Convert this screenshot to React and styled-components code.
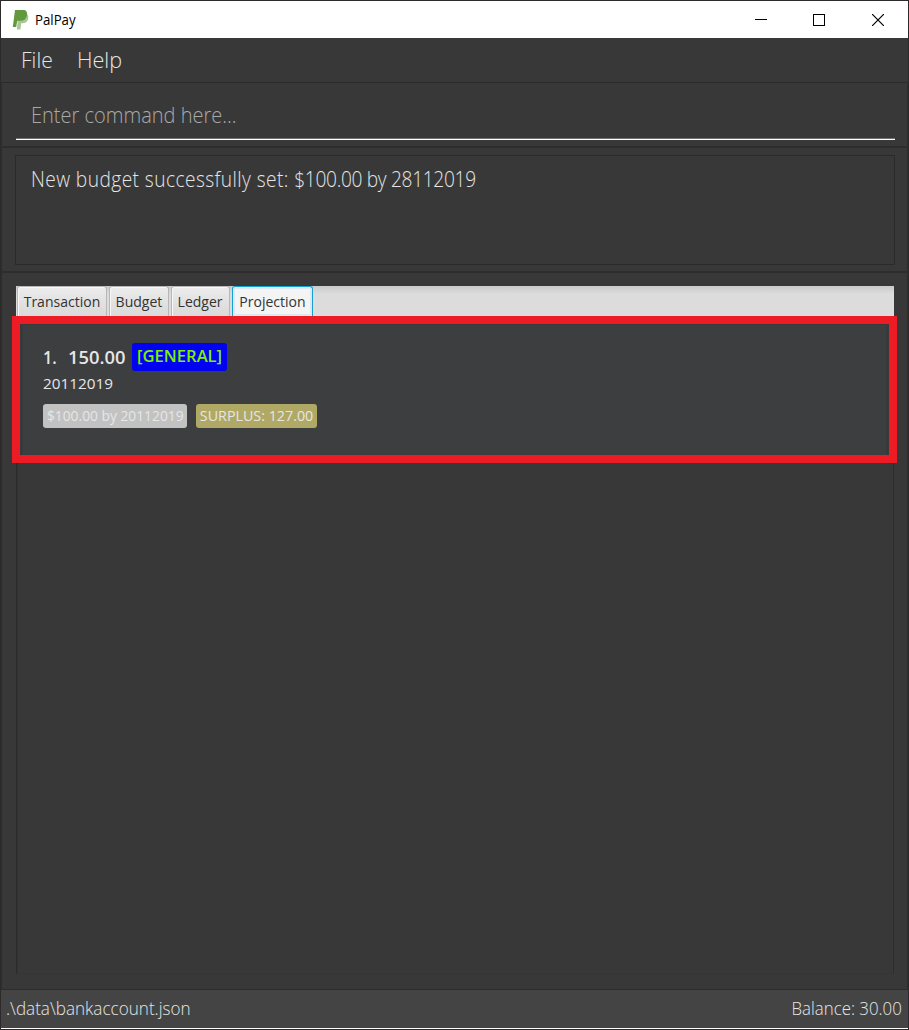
import React from "react";
import styled, { createGlobalStyle } from "styled-components";

const Global = createGlobalStyle`
  * { box-sizing: border-box; }
  html, body { margin: 0; background: #2b2b2b; }
  body { font-family: "Open Sans", "Noto Sans", sans-serif; overflow: hidden; }
`;

const Window = styled.div`
  width: 909px;
  height: 1030px;
  display: flex;
  flex-direction: column;
  border: 1px solid #2d2a2b;
  background: #383838;
`;

const Text = styled.span`
  display: block;
  flex: none;
  width: max-content;
  white-space: pre;
  font-size: ${(p) => p.$size}px;
  line-height: ${(p) => p.$line || 30}px;
  font-weight: ${(p) => p.$weight || 300};
  color: ${(p) => p.$color || "#e6e6e6"};
  letter-spacing: ${(p) => p.$track || 0}px;
  transform: scaleX(${(p) => p.$narrow || 1});
  transform-origin: ${(p) => p.$origin || "left"} center;
`;

const Spaced = styled.span`
  letter-spacing: ${(p) => p.$track}px;
`;

const TitleBar = styled.header`
  height: 37px;
  flex: none;
  display: flex;
  align-items: center;
  background: #fff;
  padding-left: 11px;
`;

const Logo = styled.svg`
  width: 18px;
  height: 22px;
  margin-right: 5px;
`;

const Controls = styled.div`
  margin-left: auto;
  display: grid;
  grid-template-columns: 58px 59px 12px;
  padding-right: 24px;
`;

const Control = styled.svg`
  width: 12px;
  height: 12px;
  fill: none;
  stroke: #000;
  shape-rendering: ${(p) => (p.$smooth ? "auto" : "crispEdges")};
`;

const MenuBar = styled.nav`
  height: 45px;
  flex: none;
  display: flex;
  gap: 23px;
  padding: 6px 20px 0;
  border-bottom: 1px solid #2b2b2b;
`;

const CommandPane = styled.section`
  height: 65px;
  flex: none;
  padding: 12px 12px 0 15px;
  border: solid #2d2d2d;
  border-width: 0 1px 2px;
`;

const CommandField = styled.div`
  height: 45px;
  padding: 4px 0 0 15px;
  border-bottom: 1px solid #fff;
  box-shadow: inset 0 -1px #727272;
  margin-left: -1px;
`;

const ResultPane = styled.section`
  height: 125px;
  flex: none;
  padding: 7px 12px 0 13px;
  border: solid #2d2d2d;
  border-width: 0 1px 2px;
`;

const ResultBox = styled.div`
  height: 110px;
  padding: 7px 15px;
  border: 1px solid #2b2b2b;
`;

const ListPane = styled.main`
  flex: 1;
  padding: 13px 13px 15px 14px;
  border: solid #2d2d2d;
  border-width: 0 1px 1px;
  display: flex;
  flex-direction: column;
`;

const TabStrip = styled.div`
  height: 30px;
  flex: none;
  display: flex;
  gap: 2px;
  padding-left: 1px;
  background: linear-gradient(#cacaca, #dcdcdc 8px);
`;

const Tab = styled.div`
  width: ${(p) => p.$width}px;
  height: 30px;
  display: flex;
  justify-content: center;
  border: 1px solid ${(p) => (p.$active ? "#169fd0" : "#b7b7b7")};
  border-bottom: 0;
  border-radius: 3px 3px 0 0;
  background: ${(p) => (p.$active ? "#f4f4f4" : "linear-gradient(#ececec, #d9d9d9)")};
  box-shadow: ${(p) => (p.$active ? "inset 0 0 0 2px #dce9f0" : "inset 1px 1px #f7f7f7")};
`;

const TabContent = styled.div`
  flex: 1;
  border: solid #2c2c2c;
  border-width: 0 1px;
  box-shadow: inset 1px 0 #323232, inset 0 -1px #353535;
`;

const Highlight = styled.div`
  height: 147px;
  margin: 0 -4px 0 -5px;
  border: 8px solid #ed1c24;
  background: #3c3e3f;
  box-shadow: inset 3px 1px #37393a, inset -3px 0 #37393a;
  padding: 19px 23px;
`;

const AmountRow = styled.div`
  display: grid;
  grid-template-columns: 24.5px 64.5px 95px;
  height: 28px;
`;

const Category = styled.div`
  height: 28px;
  background: #0202f2;
  border-radius: 3px;
  display: flex;
  justify-content: center;
`;

const TagRow = styled.div`
  display: flex;
  gap: 9px;
  margin-top: 8px;
`;

const Tag = styled.div`
  width: ${(p) => p.$width}px;
  height: 24px;
  border-radius: 3px;
  background: ${(p) => p.$fill};
  display: flex;
  justify-content: center;
`;

const StatusBar = styled.footer`
  height: 39px;
  flex: none;
  display: flex;
  justify-content: space-between;
  padding: 4px 6px 0 5px;
  background: #444;
  border-bottom: 1px solid #fff;
`;

const tabs = [
  { name: "Transaction", width: 90 },
  { name: "Budget", width: 60 },
  { name: "Ledger", width: 59 },
  { name: "Projection", width: 81, active: true },
];

export default function App() {
  return (
    <>
      <Global />
      <Window>
        <TitleBar>
          <Logo viewBox="0 0 18 22">
            <path d="M6.5 5h8.2c1.8 1.2 2 3.2 1.4 5.2-.8 2.8-2.8 4-5.6 4H9.2L8.4 20.5H4.8z" fill="#a9c796" />
            <path d="M3 1h8.2c3 0 4.4 2 3.8 5.2-.7 3.7-3 5.6-6.5 5.6H6.2c-.7 0-1 .4-1.1 1L4.2 18H.8z" fill="#62993e" />
          </Logo>
          <Text $size={14} $line={20} $weight={400} $color="#000" $narrow={0.945}>PalPay</Text>
          <Controls>
            <Control viewBox="0 0 12 12"><path d="M0 5.5h12" /></Control>
            <Control viewBox="0 0 12 12"><path d="M.5.5h11v11H.5z" /></Control>
            <Control $smooth viewBox="0 0 12 12"><path d="M0 0l12 12M12 0L0 12" strokeWidth="1.2" /></Control>
          </Controls>
        </TitleBar>
        <MenuBar>
          <Text $size={22} $narrow={0.96}>File</Text>
          <Text $size={22} $narrow={0.98}>Help</Text>
        </MenuBar>
        <CommandPane>
          <CommandField>
            <Text $size={22} $narrow={0.91} $color="#a9a9a9">Enter command here...</Text>
          </CommandField>
        </CommandPane>
        <ResultPane>
          <ResultBox>
            <Text $size={22} $narrow={0.87}>
              <Spaced $track={0.5}>New budget successfully set: </Spaced>
              <Spaced $track={-0.37}>$100.00 by 28112019</Spaced>
            </Text>
          </ResultBox>
        </ResultPane>
        <ListPane>
          <TabStrip>
            {tabs.map((t) => (
              <Tab key={t.name} $width={t.width} $active={t.active}>
                <Text $size={15} $line={28} $weight={400} $color="#333" $narrow={0.935} $origin="center">{t.name}</Text>
              </Tab>
            ))}
          </TabStrip>
          <TabContent>
            <Highlight>
              <AmountRow>
                <Text $size={18} $line={28} $weight={600} $narrow={0.9}>1.</Text>
                <Text $size={18} $line={28} $weight={600} $narrow={1.02}>150.00</Text>
                <Category>
                  <Text $size={17} $line={26} $weight={600} $color="#7cf000" $narrow={0.975} $origin="center">[GENERAL]</Text>
                </Category>
              </AmountRow>
              <Text $size={15} $line={25} $weight={400} $narrow={1.02}>20112019</Text>
              <TagRow>
                <Tag $width={144} $fill="#c2c2c2">
                  <Text $size={15} $line={23} $weight={400} $narrow={0.92} $origin="center">$100.00 by 20112019</Text>
                </Tag>
                <Tag $width={121} $fill="#b0a965">
                  <Text $size={15} $line={23} $weight={400} $narrow={0.953} $origin="center">SURPLUS: 127.00</Text>
                </Tag>
              </TagRow>
            </Highlight>
          </TabContent>
        </ListPane>
        <StatusBar>
          <Text $size={18} $line={29} $narrow={0.95}>.\data\bankaccount.json</Text>
          <Text $size={18} $line={29} $narrow={0.936} $origin="right">Balance: 30.00</Text>
        </StatusBar>
      </Window>
    </>
  );
}
